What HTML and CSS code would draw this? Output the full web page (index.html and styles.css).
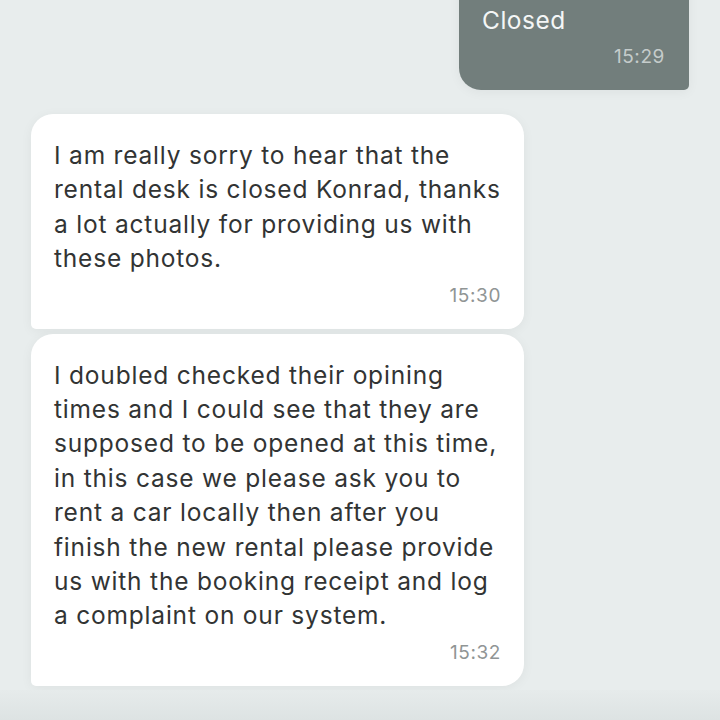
FILE: index.html
```html
<!DOCTYPE html>
<html lang="en">
  <head>
    <meta charset="UTF-8">
    <meta name="viewport" content="width=device-width, initial-scale=1.0">
    <title>Chat</title>
    <link rel="stylesheet" href="styles.css">
  </head>
  <body>
    <div class="chat">
      <div class="row row-out">
        <div class="bubble bubble-out">
          <p class="text">Closed</p>
          <span class="time">15:29</span>
        </div>
      </div>

      <div class="group">
        <div class="bubble bubble-in first">
          <p class="text">I am really sorry to hear that the rental desk is closed Konrad, thanks a lot actually for providing us with these photos.</p>
          <span class="time">15:30</span>
        </div>
        <div class="bubble bubble-in last">
          <p class="text">I doubled checked their opining times and I could see that they are supposed to be opened at this time, in this case we please ask you to rent a car locally then after you finish the new rental please provide us with the booking receipt and log a complaint on our system.</p>
          <span class="time">15:32</span>
        </div>
      </div>
    </div>
    <div class="footer-shade"></div>
  </body>
</html>
```

FILE: styles.css
```css
body {
    margin: 0;
    padding: 0;
    height: 720px;
    overflow: hidden;
    background-color: #e8eded;
    font-family: Inter, "Noto Sans", sans-serif;
    position: relative;
}
.chat {
    display: flex;
    flex-direction: column;
    padding: 0 31px;
}
.row-out {
    display: flex;
    justify-content: flex-end;
    margin-top: -29px;
}
.bubble {
    display: flex;
    flex-direction: column;
    box-sizing: border-box;
    box-shadow: 0px 2px 12px rgba(0, 0, 0, 0.05);
}
.bubble .text {
    margin: 0;
    font-size: 24.5px;
    line-height: 34.4px;
    letter-spacing: 0.8px;
}
.bubble .time {
    align-self: flex-end;
    font-size: 19px;
    line-height: 22px;
    letter-spacing: 0.6px;
}
.bubble-out {
    width: 230px;
    background-color: #727e7c;
    border-radius: 20px 5px 5px 22px;
    padding: 33px 24px 22px 23px;
}
.bubble-out .text {
    color: #f4f6f6;
    line-height: 32px;
    letter-spacing: 0.5px;
}
.bubble-out .time {
    color: #c5cccb;
    margin-top: 10px;
}
.group {
    display: flex;
    flex-direction: column;
    gap: 5px;
    margin-top: 24px;
    width: 493px;
}
.bubble-in {
    background-color: #ffffff;
    padding: 24px 23px 22px 23px;
}
.bubble-in .text {
    color: #323434;
}
.bubble-in .time {
    color: #909595;
    margin-top: 9px;
}
.first {
    border-radius: 22px 22px 16px 5px;
}
.last {
    border-radius: 22px 22px 22px 5px;
}
.footer-shade {
    position: absolute;
    left: 0;
    right: 0;
    bottom: 0;
    height: 30px;
    background: linear-gradient(#e6ebeb, #dde3e3);
}
```
